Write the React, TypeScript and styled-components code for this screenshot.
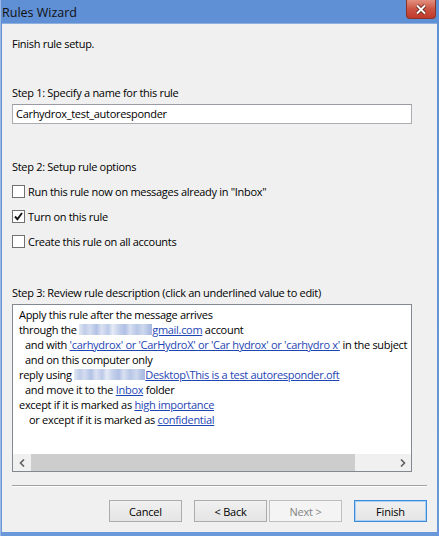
import React from 'react';
import styled, { createGlobalStyle } from 'styled-components';

const GlobalStyle = createGlobalStyle`
  html, body {
    margin: 0;
    padding: 0;
    background: #ffffff;
  }
  body {
    font-family: "Open Sans", "Noto Sans", sans-serif;
    font-size: 11px;
    letter-spacing: -0.3px;
    color: #000;
  }
`;

const Window = styled.div`
  width: 439px;
  height: 536px;
  display: flex;
  flex-direction: column;
  background: linear-gradient(to bottom, #5f8fd5, #6b98d8);
  box-sizing: border-box;
  border-left: 1px solid #9db8e2;
  overflow: hidden;
`;

const TitleBar = styled.div`
  height: 23px;
  display: flex;
  align-items: flex-start;
  justify-content: space-between;
  flex-shrink: 0;
`;

const Title = styled.div`
  font-size: 12.5px;
  letter-spacing: 0;
  line-height: 25px;
  padding-left: 1px;
  color: #111;
`;

const CloseButton = styled.div`
  width: 30px;
  height: 19px;
  margin-right: 3px;
  box-sizing: border-box;
  border: 1px solid #8c3326;
  border-top: none;
  border-radius: 0 0 4px 4px;
  background: linear-gradient(to bottom, #e3907f, #cc5444 50%, #c0392b);
  display: flex;
  align-items: center;
  justify-content: center;
`;

const Body = styled.div`
  flex: 1;
  margin: 0 2px 4px 1px;
  background: #f0f0f0;
  border-top: 1px solid #8fb0de;
  padding: 12px 9px 0 10px;
  display: flex;
  flex-direction: column;
`;

const Label = styled.div<{ $top: number }>`
  line-height: 16px;
  margin-top: ${(p) => p.$top}px;
  white-space: nowrap;
`;

const NameInput = styled.div`
  margin-top: 3px;
  width: 400px;
  height: 20px;
  box-sizing: border-box;
  background: #fff;
  border: 1px solid #abadb3;
  border-top-color: #9a9ca3;
  padding-left: 3px;
  line-height: 18px;
`;

const Options = styled.div`
  margin-top: 8px;
  display: flex;
  flex-direction: column;
  gap: 9px;
`;

const OptionRow = styled.div`
  display: flex;
  align-items: center;
  height: 16px;
  gap: 3px;
  white-space: nowrap;
`;

const Box = styled.span`
  width: 13px;
  height: 13px;
  box-sizing: border-box;
  border: 1px solid #707070;
  background: #fff;
  display: inline-flex;
  align-items: center;
  justify-content: center;
`;

const Description = styled.div`
  margin-top: 3px;
  width: 400px;
  height: 168px;
  box-sizing: border-box;
  border: 1px solid #828790;
  background: #fff;
  display: flex;
  flex-direction: column;
`;

const DescText = styled.div`
  flex: 1;
  padding: 2px 0 0 6px;
  overflow: hidden;
`;

const Line = styled.div<{ $indent?: number }>`
  line-height: 15px;
  white-space: nowrap;
  padding-left: ${(p) => p.$indent || 0}px;
`;

const Link = styled.a`
  color: #1e45b4;
  text-decoration: underline;
  cursor: pointer;
`;

const Redacted = styled.span<{ $w: number }>`
  display: inline-block;
  width: ${(p) => p.$w}px;
  height: 11px;
  vertical-align: -1px;
  background:
    linear-gradient(to right,
      #dfe6f3 0%, #b9c7e6 8%, #cfd9ee 15%, #a9bbe3 24%, #d7def0 31%,
      #b4c3e6 40%, #e2e8f4 46%, #bdcbe8 55%, #a7b9e2 63%, #d4ddef 70%,
      #b0c1e5 79%, #c9d4ec 88%, #a6b8e0 96%, #9fb3df 100%);
  opacity: 0.9;
`;

const ScrollBar = styled.div`
  height: 17px;
  display: flex;
  background: #f0f0f0;
  flex-shrink: 0;
`;

const ScrollArrow = styled.div`
  width: 17px;
  display: flex;
  align-items: center;
  justify-content: center;
`;

const ScrollTrack = styled.div`
  flex: 1;
  display: flex;
  padding: 0 1px;
`;

const Thumb = styled.div`
  width: 324px;
  background: #cdcdcd;
`;

const Separator = styled.div`
  margin-top: 13px;
  width: 415px;
  border-top: 1px solid #a0a0a0;
  border-bottom: 1px solid #ffffff;
`;

const ButtonRow = styled.div`
  margin-top: 13px;
  width: 415px;
  display: flex;
  justify-content: flex-end;
`;

const Button = styled.button<{ $default?: boolean; $gap: number }>`
  width: 73px;
  height: 22px;
  margin-left: ${(p) => p.$gap}px;
  padding: 0;
  font-family: "Open Sans", "Noto Sans", sans-serif;
  font-size: 11px;
  letter-spacing: -0.2px;
  color: #000;
  border: 1px solid ${(p) => (p.$default ? '#3c8ad8' : '#acacac')};
  box-shadow: ${(p) => (p.$default ? 'inset 0 0 0 1px #a8d0f5' : 'none')};
  background: linear-gradient(to bottom, #f0f0f0, #e5e5e5);
  border-radius: 0;
  &:disabled {
    color: #838383;
    border-color: #bfbfbf;
    background: #f4f4f4;
  }
`;

const Chevron = ({ dir }: { dir: 'left' | 'right' }) => (
  <svg width="6" height="8" viewBox="0 0 6 8">
    <path
      d={dir === 'left' ? 'M5 0.5 L1.5 4 L5 7.5' : 'M1 0.5 L4.5 4 L1 7.5'}
      fill="none"
      stroke="#606060"
      strokeWidth="1.6"
    />
  </svg>
);

const Check = () => (
  <svg width="9" height="9" viewBox="0 0 9 9">
    <path d="M1 4.5 L3.4 7.2 L8 1" fill="none" stroke="#111" strokeWidth="1.9" />
  </svg>
);

function Option({ checked, children }: { checked?: boolean; children: React.ReactNode }) {
  return (
    <OptionRow>
      <Box>{checked && <Check />}</Box>
      <span>{children}</span>
    </OptionRow>
  );
}

export default function App() {
  return (
    <>
      <GlobalStyle />
      <Window>
        <TitleBar>
          <Title>Rules Wizard</Title>
          <CloseButton>
            <svg width="12" height="11" viewBox="0 0 12 11">
              <path d="M2 1.5 L10 9.5 M10 1.5 L2 9.5" stroke="#5a1a12" strokeWidth="3.6" />
              <path d="M2 1.5 L10 9.5 M10 1.5 L2 9.5" stroke="#ffffff" strokeWidth="2" />
            </svg>
          </CloseButton>
        </TitleBar>
        <Body>
          <Label $top={0}>Finish rule setup.</Label>

          <Label $top={33}>Step 1: Specify a name for this rule</Label>
          <NameInput>Carhydrox_test_autoresponder</NameInput>

          <Label $top={35}>Step 2: Setup rule options</Label>
          <Options>
            <Option>Run this rule now on messages already in "Inbox"</Option>
            <Option checked>Turn on this rule</Option>
            <Option>Create this rule on all accounts</Option>
          </Options>

          <Label $top={36}>Step 3: Review rule description (click an underlined value to edit)</Label>
          <Description>
            <DescText>
              <Line>Apply this rule after the message arrives</Line>
              <Line>
                through the <Redacted $w={73} /><Link>gmail.com</Link> account
              </Line>
              <Line $indent={6}>
                and with <Link>'carhydrox' or 'CarHydroX' or 'Car hydrox' or 'carhydro x'</Link> in the subject
              </Line>
              <Line $indent={6}>and on this computer only</Line>
              <Line>
                reply using <Redacted $w={71} /><Link>Desktop\This is a test autoresponder.oft</Link>
              </Line>
              <Line $indent={6}>
                and move it to the <Link>Inbox</Link> folder
              </Line>
              <Line>
                except if it is marked as <Link>high importance</Link>
              </Line>
              <Line $indent={10}>
                or except if it is marked as <Link>confidential</Link>
              </Line>
            </DescText>
            <ScrollBar>
              <ScrollArrow>
                <Chevron dir="left" />
              </ScrollArrow>
              <ScrollTrack>
                <Thumb />
              </ScrollTrack>
              <ScrollArrow>
                <Chevron dir="right" />
              </ScrollArrow>
            </ScrollBar>
          </Description>

          <Separator />
          <ButtonRow>
            <Button $gap={0}>Cancel</Button>
            <Button $gap={12}>&lt; Back</Button>
            <Button $gap={2} disabled>
              Next &gt;
            </Button>
            <Button $gap={12} $default>
              Finish
            </Button>
          </ButtonRow>
        </Body>
      </Window>
    </>
  );
}
